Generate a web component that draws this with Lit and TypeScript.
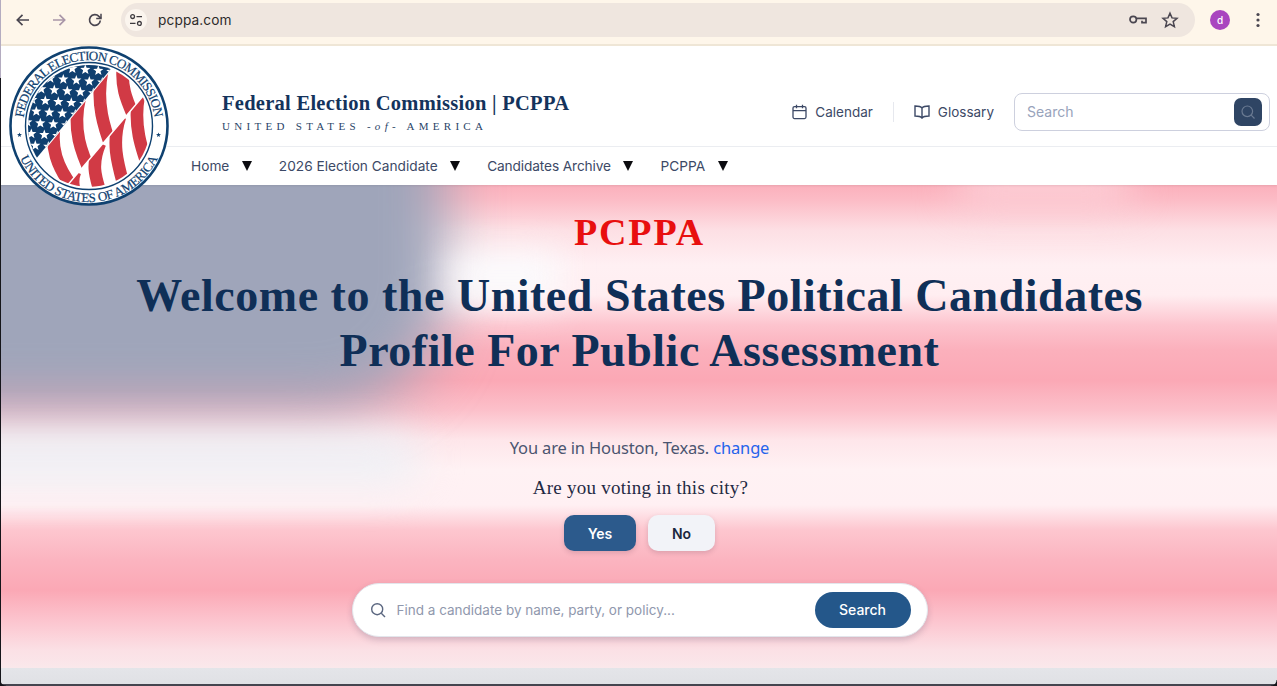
import { LitElement, html, css, svg } from "lit";
import { customElement } from "lit/decorators.js";

const star = (cx: number, cy: number, r: number) => {
  const pts: string[] = [];
  for (let i = 0; i < 10; i++) {
    const rad = i % 2 ? r * 0.42 : r;
    const a = -Math.PI / 2 + (i * Math.PI) / 5;
    pts.push(`${(cx + rad * Math.cos(a)).toFixed(1)},${(cy + rad * Math.sin(a)).toFixed(1)}`);
  }
  return pts.join(" ");
};

const stars: string[] = [];
for (let j = -2; j < 7; j++) {
  for (let i = -3; i < 7; i++) {
    stars.push(star(63.3 + i * 13 + j * -9, 79.3 + i * 1 + j * 10.7, 5.4));
  }
}

const band1 = [
  "M 90 190 C 75 260, 95 320, 145 385",
  "M 165 110 C 140 210, 170 280, 200 345",
  "M 232 30 C 210 130, 240 210, 262 270",
  "M 295 10 C 285 90, 310 130, 335 190",
];
const band2 = [
  "M 150 335 C 140 360, 145 380, 150 400",
  "M 225 250 C 195 320, 215 360, 230 410",
  "M 285 170 C 255 260, 285 330, 305 410",
  "M 345 90 C 320 190, 350 270, 380 350",
];

@customElement("site-seal")
class SiteSeal extends LitElement {
  static styles = css`
    :host { display: block; position: absolute; left: 9px; top: 46px; width: 160px; height: 160px; z-index: 5; }
    svg { display: block; }
    .ring-text { font-family: "Liberation Serif", serif; font-size: 13px; fill: #0f4170; stroke: #0f4170; stroke-width: 0.2px; }
    .stripe { fill: none; stroke: #d13a45; stroke-width: 38; }
  `;
  render() {
    return html`<svg width="160" height="160" viewBox="9 46 160 160">
      <defs>
        <clipPath id="inner"><circle cx="89" cy="126" r="61"></circle></clipPath>
        <clipPath id="canton"><polygon points="0,40 135,40 125,52 30,166 0,200"></polygon></clipPath>
        <clipPath id="b1"><polygon points="30.800,166.800 125.800,52.800 165,70 152,84.500 60,193"></polygon></clipPath>
        <clipPath id="b2"><polygon points="165,71 153,85.500 61,194 61,215 175,215"></polygon></clipPath>
        <path id="topArc" d="M 23.500 118 A 66 66 0 0 1 154.500 118"></path>
        <path id="botArc" d="M 20.500 159 A 76 76 0 0 0 157.500 159"></path>
      </defs>
      <circle cx="89" cy="126" r="78.500" fill="#fff" stroke="#0f4170" stroke-width="2.600"></circle>
      <circle cx="89" cy="126" r="63.500" fill="#fff" stroke="#0f4170" stroke-width="1.400"></circle>
      <g clip-path="url(#inner)">
        <rect x="9" y="46" width="160" height="160" fill="#fff"></rect>
        <g clip-path="url(#canton)">
          <rect x="9" y="46" width="160" height="160" fill="#0f3f6f"></rect>
          ${stars.map((p) => svg`<polygon points=${p} fill="#fff"></polygon>`)}
        </g>
        <g clip-path="url(#b1)">
          <g transform="translate(25 60) scale(0.3333)">
            ${band1.map((d) => svg`<path class="stripe" d=${d}></path>`)}
          </g>
        </g>
        <g clip-path="url(#b2)">
          <g transform="translate(25 60) scale(0.3333)">
            ${band2.map((d) => svg`<path class="stripe" d=${d}></path>`)}
          </g>
        </g>
      </g>
      <text class="ring-text"><textPath href="#topArc" startOffset="50%" text-anchor="middle" textLength="190" lengthAdjust="spacing">FEDERAL ELECTION COMMISSION</textPath></text>
      <text class="ring-text"><textPath href="#botArc" startOffset="50%" text-anchor="middle" textLength="172" lengthAdjust="spacing">UNITED STATES OF AMERICA</textPath></text>
      <polygon points=${star(19.500, 135, 2.600)} fill="#0f4170"></polygon>
      <polygon points=${star(158.500, 135, 2.600)} fill="#0f4170"></polygon>
    </svg>`;
  }
}

@customElement("browser-bar")
class BrowserBar extends LitElement {
  static styles = css`
    :host { display: flex; align-items: center; height: 44px; background: #fef6ea; border-bottom: 2px solid #efe6d6; box-sizing: content-box; padding-left: 14px; padding-right: 12px; }
    .nav { display: flex; gap: 18px; align-items: center; width: 107px; margin-top: -4px; }
    .nav svg { display: block; }
    .omni { flex: none; width: 1074px; height: 34px; margin-top: -4px; border-radius: 17px; background: #efe6df; display: flex; align-items: center; padding: 0 16px 0 4px; box-sizing: border-box; }
    .tune { width: 22px; height: 22px; border-radius: 50%; background: #fbf5ee; display: flex; align-items: center; justify-content: center; }
    .url { font: 400 13.7px "Inter", sans-serif; color: #2c2a2a; margin-left: 11px; flex: 1; letter-spacing: 0.1px; }
    .omni-icons { display: flex; align-items: center; gap: 14px; }
    .right { display: flex; align-items: center; margin-left: 15px; gap: 26px; margin-top: -4px; }
    .avatar { width: 20px; height: 20px; border-radius: 50%; background: #a945bf; color: #fff; font: 500 10px "Inter", sans-serif; display: flex; align-items: center; justify-content: center; }
    .kebab { display: block; }
  `;
  render() {
    return html`
      <div class="nav">
        <svg width="18" height="18" viewBox="0 0 18 18" fill="none" stroke="#4a4650" stroke-width="1.700"><path d="M15 9H3.500M8.500 3.800 3.300 9l5.200 5.200"></path></svg>
        <svg width="18" height="18" viewBox="0 0 18 18" fill="none" stroke="#a996a8" stroke-width="1.700"><path d="M3 9h11.500M9.500 3.800 14.700 9l-5.200 5.200"></path></svg>
        <svg width="18" height="18" viewBox="0 0 18 18" fill="none" stroke="#4a4650" stroke-width="1.700"><path d="M14.300 9.500a5.400 5.400 0 1 1-1.400-4.100L15 7.400"></path><path d="M15 2.800v4.800h-4.800" stroke-width="1.500"></path></svg>
      </div>
      <div class="omni">
        <div class="tune">
          <svg width="14" height="14" viewBox="0 0 14 14" fill="none" stroke="#3d3a3f" stroke-width="1.300"><circle cx="3.600" cy="3.600" r="1.900"></circle><path d="M7.500 3.600H13M1 10.400h5.500"></path><circle cx="10.400" cy="10.400" r="1.900"></circle></svg>
        </div>
        <div class="url">pcppa.com</div>
        <div class="omni-icons">
          <svg width="18" height="12" viewBox="0 0 18 12" fill="none" stroke="#4a4650" stroke-width="1.700"><circle cx="4.200" cy="5.500" r="3.200"></circle><path d="M7.500 4.300h9.500v4.400h-4v-2"></path></svg>
          <svg width="18" height="18" viewBox="0 0 18 18" fill="none" stroke="#4a4650" stroke-width="1.500"><path d="M9 2.200l2 4.700 5 .4-3.800 3.300 1.200 5L9 13l-4.400 2.600 1.200-5L2 7.300l5-.4z"></path></svg>
        </div>
      </div>
      <div class="right">
        <div class="avatar">d</div>
        <svg class="kebab" width="4" height="16" viewBox="0 0 4 16" fill="#4a4650"><circle cx="2" cy="2.500" r="1.600"></circle><circle cx="2" cy="8" r="1.600"></circle><circle cx="2" cy="13.500" r="1.600"></circle></svg>
      </div>
    `;
  }
}

@customElement("site-header")
class SiteHeader extends LitElement {
  static styles = css`
    :host { display: block; background: #fff; position: relative; z-index: 2; font-family: "Inter", sans-serif; }
    .top { display: flex; align-items: center; height: 100px; border-bottom: 1px solid #eceef2; padding: 0 7px 0 222px; box-sizing: content-box; }
    .brand { flex: 1; padding-top: 30px; }
    .title { font: 700 20.5px "Liberation Serif", serif; color: #14335c; letter-spacing: 0.27px; white-space: nowrap; line-height: 26px; }
    .sub { font: 400 11px "Liberation Serif", serif; color: #2a4468; letter-spacing: 4.3px; white-space: nowrap; margin-top: 3px; line-height: 14px; }
    .sub i { font-style: italic; }
    .tools { display: flex; align-items: center; padding-top: 32px; }
    .tool { display: flex; align-items: center; gap: 8px; font-size: 13.5px; color: #3c4966; }
    .tool svg { display: block; }
    .sep { width: 1px; height: 20px; background: #e6e8ee; margin: 0 20px; }
    .search { margin-left: 20px; width: 256px; height: 38px; border: 1px solid #cdd0de; border-radius: 8px; box-sizing: border-box; display: flex; align-items: center; justify-content: space-between; padding: 0 7px 0 12px; }
    .search span { font-size: 14px; color: #98a3bb; margin-top: -1px; }
    .go { width: 28px; height: 28px; border-radius: 7px; background: #2f4564; display: flex; align-items: center; justify-content: center; }
    nav { display: flex; align-items: center; height: 37px; padding: 0 0 1px 191px; font-size: 13.7px; color: #3c4966; box-shadow: 0 1px 2px rgba(0,0,0,.08); }
    .item { display: flex; align-items: center; gap: 12.5px; margin-right: 27px; white-space: nowrap; }
    .item:nth-child(3) { letter-spacing: -0.12px; }
    .caret { width: 0; height: 0; border-left: 5.5px solid transparent; border-right: 5.5px solid transparent; border-top: 10px solid #0c0c10; }
  `;
  render() {
    const items = ["Home", "2026 Election Candidate", "Candidates Archive", "PCPPA"];
    return html`
      <div class="top">
        <div class="brand">
          <div class="title">Federal Election Commission | PCPPA</div>
          <div class="sub">UNITED STATES <i>-of-</i> AMERICA</div>
        </div>
        <div class="tools">
          <div class="tool">
            <svg width="15" height="16" viewBox="0 0 15 16" fill="none" stroke="#3c4966" stroke-width="1.300"><rect x="1" y="2.600" width="13" height="12" rx="1.500"></rect><path d="M1 6.600h13M4.500 .8v3.400M10.500 .8v3.400"></path></svg>
            Calendar
          </div>
          <div class="sep"></div>
          <div class="tool">
            <svg width="16" height="14" viewBox="0 0 16 14" fill="none" stroke="#3c4966" stroke-width="1.400"><path d="M8 3C7 1.600 5.500 1 1 1v10c4.500 0 6 .6 7 2 1-1.400 2.500-2 7-2V1c-4.500 0-6 .6-7 2zM8 3v10"></path></svg>
            Glossary
          </div>
          <div class="search">
            <span>Search</span>
            <div class="go"><svg width="16" height="16" viewBox="0 0 16 16" fill="none" stroke="#6a7a92" stroke-width="1.200"><circle cx="7.300" cy="7.300" r="5.300"></circle><path d="M11.200 11.200 14.500 14.500"></path></svg></div>
          </div>
        </div>
      </div>
      <nav>
        ${items.map((t) => html`<div class="item">${t}<span class="caret"></span></div>`)}
      </nav>
    `;
  }
}

@customElement("hero-section")
class HeroSection extends LitElement {
  static styles = css`
    :host { display: block; position: relative; height: 483px; overflow: hidden; background: linear-gradient(180deg, #fbb0bc 0px, #fcbcc6 15px, #fddfe4 45px, #fff0f3 80px, #ffeef1 110px, #fdc4ce 140px, #fbb0bc 165px, #fba8b5 195px, #fcc0ca 225px, #fee6ea 255px, #fff2f4 285px, #fff0f3 320px, #fdc6cf 345px, #fbb4c0 375px, #fba8b5 405px, #fcc4ce 435px, #fbe0e5 465px, #fae8eb 483px); }
    .canton { position: absolute; left: -70px; top: -70px; width: 515px; height: 295px; background: #9fa5ba; border-bottom-right-radius: 120px; filter: blur(28px); }
    .under { position: absolute; left: -80px; top: 248px; width: 500px; height: 50px; background: #eef0f5; border-radius: 0 40px 40px 0; filter: blur(20px); }
    .glow { position: absolute; left: 450px; top: 68px; width: 110px; height: 50px; background: #fbfbfd; filter: blur(18px); }
    .patch { position: absolute; left: 960px; top: -20px; width: 170px; height: 36px; background: #fdd6dd; filter: blur(20px); }
    .content { position: relative; display: flex; flex-direction: column; align-items: center; text-align: center; padding-top: 22px; }
    .eyebrow { font: 700 38px/50px "Liberation Serif", serif; color: #e80f0f; letter-spacing: 1.9px; margin: 0 0 0 2px; }
    h1 { font: 700 46px/55px "Liberation Serif", serif; color: #0f2f57; letter-spacing: 0.52px; margin: 11px 0 0 2px; }
    .loc { font: 400 16.5px/24px "Noto Sans", sans-serif; color: #4b5570; margin: 58px 0 0 2px; letter-spacing: -0.16px; }
    .loc a { color: #2563eb; }
    .q { font: 400 19px/24px "Liberation Serif", serif; color: #1f2a44; margin: 16px 0 0 4px; letter-spacing: 0.25px; }
    .btns { display: flex; gap: 12px; margin: 15px 0 0 2px; font: 600 14px "Inter", sans-serif; }
    .btn { height: 36px; border-radius: 10px; display: flex; align-items: center; justify-content: center; box-shadow: 0 2px 5px rgba(80,40,60,.18); }
    .yes { width: 72px; background: #2c5a8c; color: #fff; }
    .no { width: 67px; background: #f2f3f8; color: #1a2740; }
    .find { margin: 32px 0 0 2px; width: 576px; height: 54px; box-sizing: border-box; background: #fff; border-radius: 27px; border: 1px solid #e3e6ec; box-shadow: 0 3px 6px rgba(70,60,90,.22); display: flex; align-items: center; padding: 0 16px 1px 17px; font-family: "Inter", sans-serif; }
    .find svg { display: block; }
    .ph { flex: 1; text-align: left; margin-left: 11px; font-size: 13.5px; color: #9098ad; }
    .sbtn { width: 96px; height: 36px; border-radius: 18px; background: #24578a; color: #fff; font-size: 14px; font-weight: 500; display: flex; align-items: center; justify-content: center; }
  `;
  render() {
    return html`
      <div class="canton"></div>
      <div class="under"></div>
      <div class="glow"></div>
      <div class="patch"></div>
      <div class="content">
        <p class="eyebrow">PCPPA</p>
        <h1>Welcome to the United States Political Candidates<br />Profile For Public Assessment</h1>
        <p class="loc">You are in Houston, Texas. <a>change</a></p>
        <p class="q">Are you voting in this city?</p>
        <div class="btns"><div class="btn yes">Yes</div><div class="btn no">No</div></div>
        <div class="find">
          <svg width="16" height="16" viewBox="0 0 16 16" fill="none" stroke="#5b6780" stroke-width="1.400"><circle cx="7.200" cy="7.200" r="5.500"></circle><path d="M11.300 11.300 15 15"></path></svg>
          <span class="ph">Find a candidate by name, party, or policy...</span>
          <div class="sbtn">Search</div>
        </div>
      </div>
    `;
  }
}

@customElement("app-root")
export class AppRoot extends LitElement {
  static styles = css`
    :host { display: block; position: relative; width: 1277px; height: 686px; overflow: hidden; background: #fff; }
    .strip { height: 16px; background: linear-gradient(180deg, #e4e5e9, #e0e1e5); }
    .edge { height: 2px; background: #45454f; }
    .left-a { position: absolute; left: 0; top: 0; width: 1px; height: 78px; background: #b4acc0; z-index: 6; }
    .left-b { position: absolute; left: 0; top: 78px; width: 1px; height: 608px; background: #15151a; z-index: 6; }
    .corner { position: absolute; bottom: 0; width: 6px; height: 6px; z-index: 6; }
    .cl { left: 0; background: radial-gradient(circle at 100% 0, transparent 5px, #15151a 6px); }
    .cr { right: 0; background: radial-gradient(circle at 0 0, transparent 5px, #15151a 6px); }
  `;
  render() {
    return html`
      <browser-bar></browser-bar>
      <site-header></site-header>
      <site-seal></site-seal>
      <hero-section></hero-section>
      <div class="strip"></div>
      <div class="edge"></div>
      <div class="left-a"></div>
      <div class="left-b"></div>
      <div class="corner cl"></div>
      <div class="corner cr"></div>
    `;
  }
}
